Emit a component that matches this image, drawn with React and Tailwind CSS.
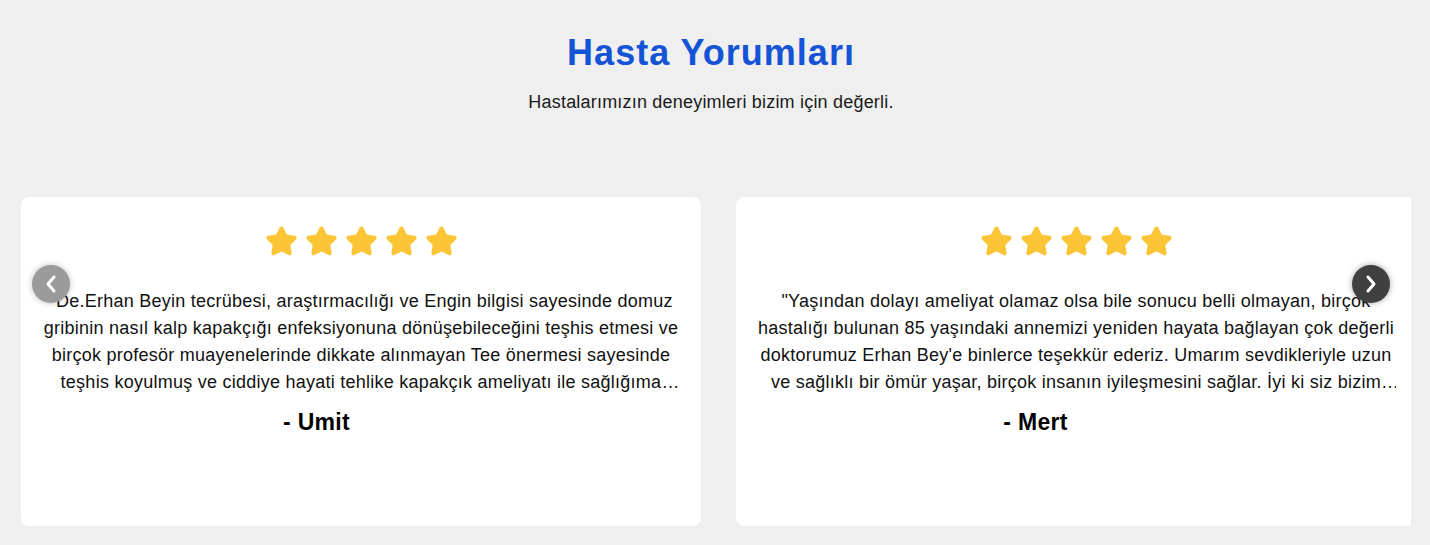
import { Star } from "lucide-react";

const reviews = [
  {
    text: "\"De.Erhan Beyin tecrübesi, araştırmacılığı ve Engin bilgisi sayesinde domuz gribinin nasıl kalp kapakçığı enfeksiyonuna dönüşebileceğini teşhis etmesi ve birçok profesör muayenelerinde dikkate alınmayan Tee önermesi sayesinde teşhis koyulmuş ve ciddiye hayati tehlike kapakçık ameliyatı ile sağlığıma kavuştum. Kendisine ve tüm ekibine sonsuz teşekkür ederim.\"",
    name: "- Umit",
    rest: "Özdemir",
    spacer: "w-[89px]",
  },
  {
    text: "\"Yaşından dolayı ameliyat olamaz olsa bile sonucu belli olmayan, birçok hastalığı bulunan 85 yaşındaki annemizi yeniden hayata bağlayan çok değerli doktorumuz Erhan Bey'e binlerce teşekkür ederiz. Umarım sevdikleriyle uzun ve sağlıklı bir ömür yaşar, birçok insanın iyileşmesini sağlar. İyi ki siz bizim doktorumuzsunuz.\"",
    name: "- Mert",
    rest: "Aydın",
    spacer: "w-[81px]",
  },
];

function ReviewCard({ review }) {
  return (
    <div className="w-[680px] h-[329px] shrink-0 bg-white rounded-lg px-[20px] pt-[28px] flex flex-col items-center">
      {/* STARS */}
      <div className="flex gap-[7px]">
        {[0, 1, 2, 3, 4].map((i) => (
          <Star key={i} size={33} fill="#fbc537" color="#fbc537" strokeWidth={2} />
        ))}
      </div>

      {/* TEXT */}
      <p className="mt-[30px] text-[18px] leading-[27px] tracking-[0.25px] text-[#111] text-center line-clamp-4">
        {review.text}
      </p>

      {/* NAME (rest of the name still fading in) */}
      <p className="mt-[12px] text-[23px] leading-[28px] tracking-[0.3px] font-bold text-black whitespace-nowrap">
        {review.name}
        <span
          className={`inline-block align-top ${review.spacer} pl-[7px] text-left overflow-hidden text-transparent`}
        >
          {review.rest}
        </span>
      </p>
    </div>
  );
}

function Arrow({ dir, className }) {
  return (
    <button
      className={`absolute top-[68px] w-[38px] h-[38px] rounded-full flex items-center justify-center ${className}`}
    >
      <svg width="14" height="20" viewBox="0 0 14 20" fill="none">
        <polyline
          points={dir === "left" ? "10,3 4,10 10,17" : "4,3 10,10 4,17"}
          stroke="white"
          strokeWidth="3"
          strokeLinecap="round"
          strokeLinejoin="round"
        />
      </svg>
    </button>
  );
}

export default function App() {
  return (
    <div
      className="w-full h-[545px] bg-[#efefef] overflow-hidden"
      style={{ fontFamily: '"Liberation Sans", Arial, sans-serif' }}
    >
      {/* HEADER */}
      <div className="pt-[31px] pr-[8px] text-center">
        <h2 className="text-[36px] leading-[44px] font-bold text-[#1553d6] tracking-[1px]">
          Hasta Yorumları
        </h2>
        <p className="mt-[15px] text-[18px] leading-[24px] tracking-[0.2px] text-[#1a1a1a]">
          Hastalarımızın deneyimleri bizim için değerli.
        </p>
      </div>

      {/* SLIDER */}
      <div className="relative mt-[83px] ml-[21px] w-[1390px]">
        <div className="flex gap-[35px] overflow-hidden">
          {reviews.map((r, i) => (
            <ReviewCard key={i} review={r} />
          ))}
        </div>

        <Arrow
          dir="left"
          className="left-[11px] bg-[#9b9b9b] shadow-[0_0_6px_rgba(0,0,0,0.25)]"
        />
        <Arrow
          dir="right"
          className="left-[1331px] bg-[#404040] shadow-[0_0_6px_rgba(0,0,0,0.35)]"
        />
      </div>
    </div>
  );
}
